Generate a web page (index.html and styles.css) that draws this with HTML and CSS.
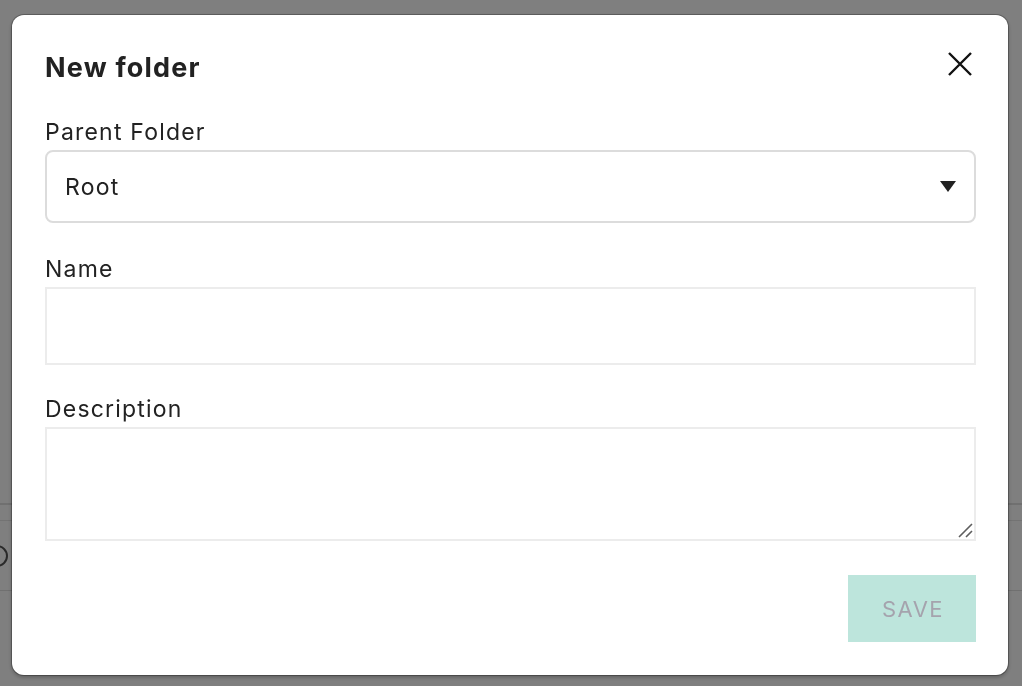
FILE: index.html
```html
<!DOCTYPE html>
<html>
<head>
    <title>New folder</title>
    <link rel="stylesheet" href="styles.css">
</head>
<body>
    <div class="page">
        <div class="list">
            <div class="list-head"></div>
            <div class="list-row">
                <span class="row-icon"></span>
            </div>
        </div>
    </div>

    <div class="overlay">
        <div class="modal">
            <div class="modal-header">
                <h2 class="modal-title">New folder</h2>
                <button class="close-btn" aria-label="Close">
                    <svg width="26" height="26" viewBox="0 0 26 26">
                        <path d="M2 2 L24 24 M24 2 L2 24" stroke="#111" stroke-width="2.4" fill="none"/>
                    </svg>
                </button>
            </div>

            <label class="field-label">Parent Folder</label>
            <div class="select-box">
                <span class="select-value">Root</span>
                <span class="select-arrow"></span>
            </div>

            <label class="field-label">Name</label>
            <input class="text-input" type="text">

            <label class="field-label">Description</label>
            <div class="area-wrap">
                <textarea class="text-area"></textarea>
                <!-- resize grip -->
                <svg class="grip" width="16" height="16" viewBox="0 0 16 16">
                    <path d="M2 15 L15 2 M9 15 L15 9" stroke="#5e5e5e" stroke-width="1.6" fill="none"/>
                </svg>
            </div>

            <div class="modal-footer">
                <button class="save-btn" disabled>SAVE</button>
            </div>
        </div>
    </div>
</body>
</html>
```

FILE: styles.css
```css
body {
    margin: 0;
    background-color: #ffffff;
    font-family: Inter, "Open Sans", sans-serif;
    color: #222;
}

/* page behind the overlay */
.page {
    height: 686px;
    overflow: hidden;
}

.list {
    padding-top: 503px;
}

.list-head {
    height: 15px;
    border-top: 2px solid #e0e0e0;
    border-bottom: 1px solid #e6e6e6;
}

.list-row {
    height: 69px;
    border-bottom: 1px solid #e0e0e0;
    display: flex;
    align-items: center;
}

.row-icon {
    width: 18px;
    height: 18px;
    margin-left: -14px;
    border: 2px solid #555;
    border-radius: 50%;
}

/* modal */
.overlay {
    position: fixed;
    inset: 0;
    background-color: rgba(0, 0, 0, 0.5);
    display: flex;
    align-items: flex-start;
    padding: 15px 0 0 12px;
}

.modal {
    width: 996px;
    height: 660px;
    box-sizing: border-box;
    background-color: #fff;
    border-radius: 12px;
    box-shadow: 0 0 0 1px rgba(0, 0, 0, 0.25), 0 2px 4px rgba(0, 0, 0, 0.3);
    padding: 36px 32px 32px 33px;
    display: flex;
    flex-direction: column;
}

.modal-header {
    display: flex;
    justify-content: space-between;
    align-items: flex-start;
    margin-bottom: 33px;
}

.modal-title {
    margin: 0;
    font-size: 27px;
    font-weight: 700;
    letter-spacing: 1.2px;
    color: #222;
    line-height: 34px;
}

.close-btn {
    background: none;
    border: none;
    padding: 0;
    margin: 0 3px 0 0;
    cursor: pointer;
    width: 26px;
    height: 26px;
}

.field-label {
    display: block;
    font-size: 23px;
    line-height: 28px;
    letter-spacing: 1.2px;
    color: #222;
    margin-bottom: 4px;
}

.select-box {
    height: 73px;
    box-sizing: border-box;
    border: 2px solid #dcdcdc;
    border-radius: 8px;
    display: flex;
    align-items: center;
    justify-content: space-between;
    padding: 0 18px 0 18px;
    margin-bottom: 32px;
}

.select-value {
    font-size: 23px;
    letter-spacing: 1.2px;
    color: #222;
}

.select-arrow {
    width: 0;
    height: 0;
    border-left: 8px solid transparent;
    border-right: 8px solid transparent;
    border-top: 11px solid #222;
}

.text-input {
    height: 78px;
    box-sizing: border-box;
    border: 2px solid #ececec;
    outline: none;
    margin: 0 0 30px 0;
    padding: 0 18px;
    font-size: 22px;
    font-family: inherit;
}

.area-wrap {
    position: relative;
    display: flex;
}

.text-area {
    flex: 1;
    height: 114px;
    box-sizing: border-box;
    border: 2px solid #ececec;
    outline: none;
    margin: 0;
    padding: 12px 18px;
    font-size: 22px;
    font-family: inherit;
    resize: none;
}

.grip {
    position: absolute;
    right: 3px;
    bottom: 3px;
}

.modal-footer {
    display: flex;
    justify-content: flex-end;
    margin-top: 34px;
}

.save-btn {
    width: 128px;
    height: 67px;
    border: none;
    background-color: #bde5dc;
    color: #a5a3ad;
    font-family: inherit;
    font-size: 22px;
    letter-spacing: 1.4px;
    padding: 0 0 0 2px;
    cursor: default;
}
```
